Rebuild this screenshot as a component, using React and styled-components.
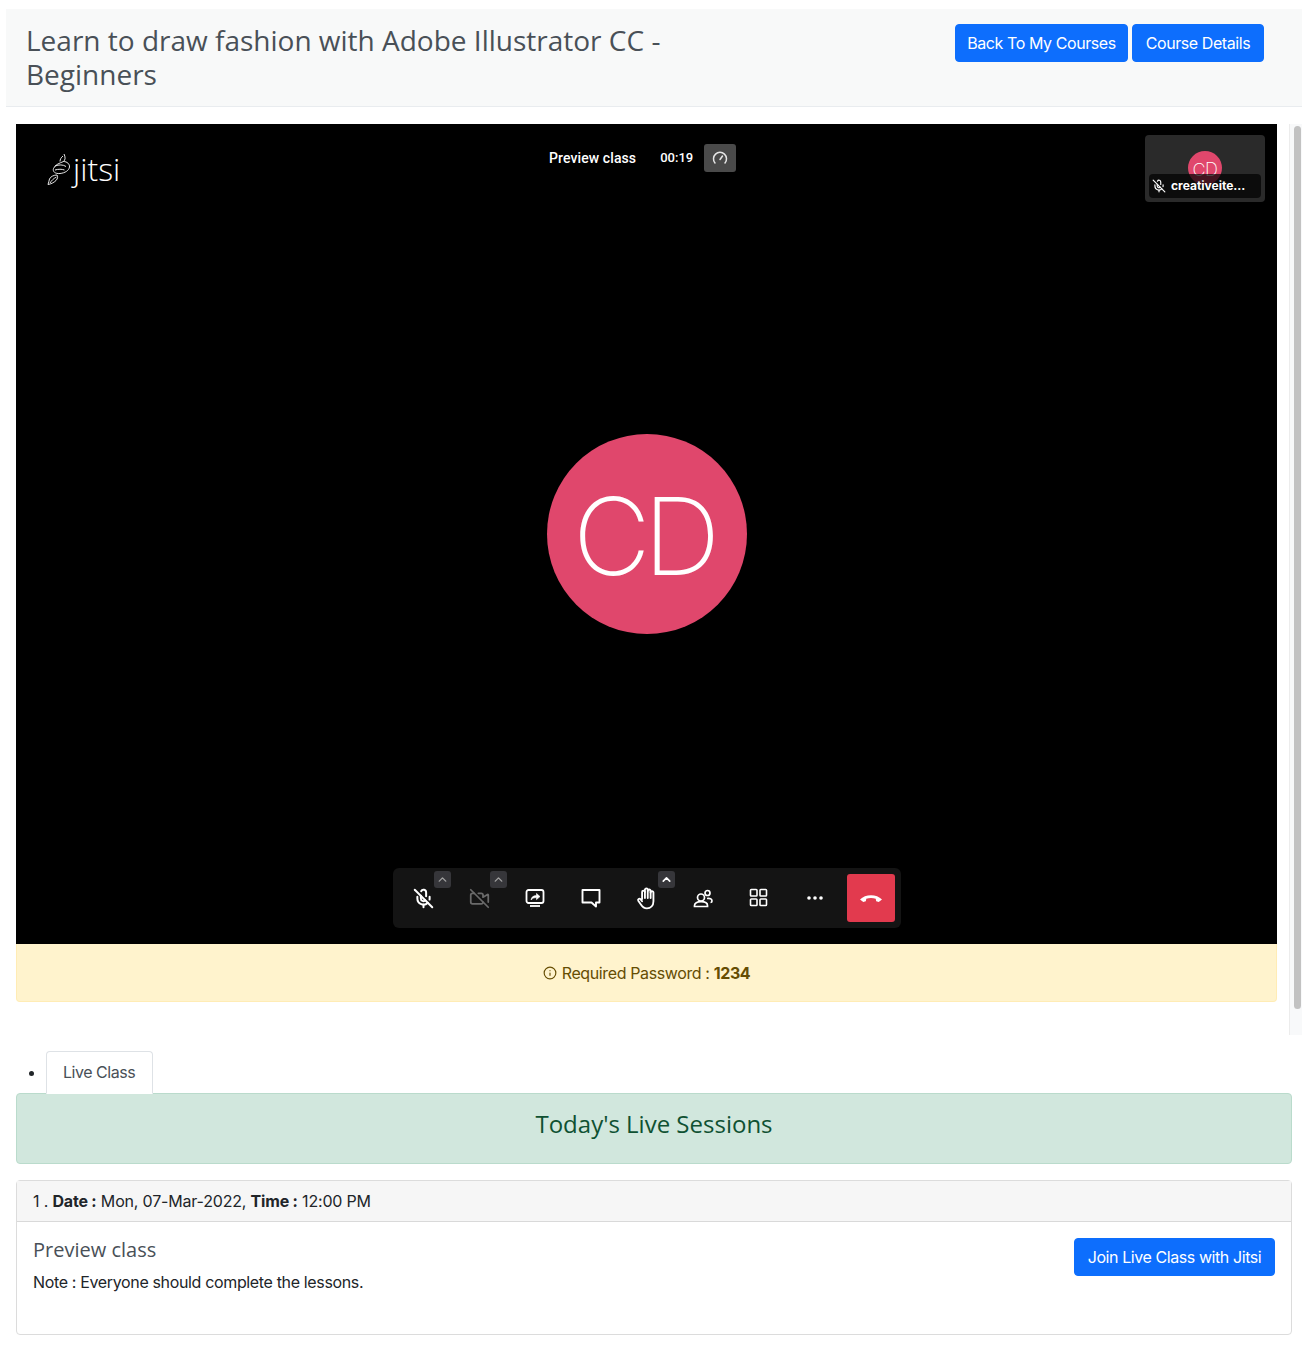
import React from 'react';
import styled, { createGlobalStyle } from 'styled-components';
import { MicOff, VideoOff, ChevronUp, Info } from 'lucide-react';

const GlobalStyle = createGlobalStyle`
  html, body { margin: 0; padding: 0; background: #fff; }
  body { font-family: Inter, "Liberation Sans", sans-serif; font-size: 16px; letter-spacing: -0.35px; color: #212529; }
  * { box-sizing: border-box; }
`;

const Page = styled.div`
  width: 1307px;
  height: 1348px;
  padding: 9px 5px 0 6px;
  overflow: hidden;
`;

const Header = styled.div`
  display: flex;
  height: 98px;
  padding: 14px 38px 0 20px;
  background: #f8f9f9;
  border-bottom: 1px solid #e9ecef;
  justify-content: space-between;
`;

const Title = styled.h1`
  width: 680px;
  margin: 0;
  font: 400 28px/34px "Open Sans", sans-serif;
  letter-spacing: 0;
  color: #495057;
`;

const ButtonGroup = styled.div`
  display: flex;
  gap: 4px;
  height: 38px;
  margin-top: 1px;
`;

const Button = styled.button`
  width: ${p => p.$width}px;
  height: 38px;
  padding: 0;
  border: 1px solid #0d6efd;
  border-radius: 4px;
  background: #0d6efd;
  color: #fff;
  font: 400 16px/24px Inter, sans-serif;
  letter-spacing: -0.42px;
  white-space: nowrap;
`;

const Content = styled.div`
  padding: 0 10px;
`;

const FrameRow = styled.div`
  display: flex;
  gap: 12px;
  margin: 17px -10px 0 0;
  height: 911px;
`;

const FrameMain = styled.div`
  flex: none;
  width: 1261px;
`;

const Scrollbar = styled.div`
  flex: none;
  width: 13px;
  padding: 2px 1px 26px 4px;
  background: #f8f9fa;
  border-left: 1px solid #ececec;
`;

const ScrollThumb = styled.div`
  height: 100%;
  border-radius: 4px;
  background: #c2c2c2;
`;

const Video = styled.div`
  position: relative;
  display: flex;
  align-items: center;
  justify-content: center;
  height: 820px;
  background: #000;
  color: #fff;
`;

const LargeAvatar = styled.div`
  display: flex;
  align-items: center;
  justify-content: center;
  width: 200px;
  height: 200px;
  padding: 4px 7px 0 0;
  border-radius: 50%;
  background: #e0476c;
  font: 150 107px/1 Inter, sans-serif;
  letter-spacing: -7px;
  color: #fff;
`;

const Logo = styled.div`
  position: absolute;
  top: 26px;
  left: 31px;
  display: flex;
  align-items: center;
  gap: 2px;
  font: 300 32px/38px "Open Sans", sans-serif;
  letter-spacing: 0;
  color: #fff;
`;

const Subject = styled.div`
  position: absolute;
  top: 20px;
  left: 533px;
  display: flex;
  align-items: center;
  height: 28px;
  font: 500 14px/20px Roboto, sans-serif;
  letter-spacing: 0.1px;
`;

const Timer = styled.span`
  margin-left: 24px;
  font-size: 13px;
  letter-spacing: 0;
`;

const Stats = styled.div`
  display: flex;
  align-items: center;
  justify-content: center;
  width: 32px;
  height: 28px;
  margin-left: 11px;
  border-radius: 3px;
  background: #4a4a4a;
`;

const Thumb = styled.div`
  position: absolute;
  top: 11px;
  right: 12px;
  display: flex;
  justify-content: center;
  width: 120px;
  height: 67px;
  padding-top: 16px;
  border-radius: 4px;
  background: #2a2a2a;
  overflow: hidden;
`;

const SmallAvatar = styled.div`
  width: 34px;
  height: 34px;
  border-radius: 50%;
  background: #e0476c;
  font: 200 18px/37px Inter, sans-serif;
  letter-spacing: -0.5px;
  text-align: center;
`;

const ThumbLabel = styled.div`
  position: absolute;
  left: 4px;
  right: 4px;
  bottom: 4px;
  display: flex;
  align-items: center;
  gap: 5px;
  height: 24px;
  padding-left: 3px;
  border-radius: 4px;
  background: rgba(0, 0, 0, 0.7);
  font: 700 12px/16px Inter, sans-serif;
  letter-spacing: 0;
`;

const Toolbar = styled.div`
  position: absolute;
  left: 377px;
  bottom: 16px;
  display: flex;
  align-items: center;
  gap: 8px;
  width: 508px;
  height: 60px;
  padding: 6px;
  border-radius: 6px;
  background: #141414;
`;

const ToolButton = styled.div`
  position: relative;
  display: flex;
  align-items: center;
  justify-content: center;
  width: 48px;
  height: 48px;
  color: ${p => (p.$dim ? '#6a6a6a' : '#fff')};
`;

const Caret = styled.div`
  position: absolute;
  top: -3px;
  right: -4px;
  display: flex;
  align-items: center;
  justify-content: center;
  width: 17px;
  height: 17px;
  border-radius: 3px;
  background: #36363a;
  color: ${p => (p.$bright ? '#fff' : '#a0a0a0')};
`;

const HangUp = styled(ToolButton)`
  border-radius: 3px;
  background: #e23a4e;
`;

const PasswordAlert = styled.div`
  display: flex;
  align-items: center;
  justify-content: center;
  gap: 5px;
  height: 58px;
  border: 1px solid #ffecb5;
  border-top: none;
  border-radius: 0 0 4px 4px;
  background: #fff3cd;
  color: #664d03;
  letter-spacing: -0.38px;
`;

const TabList = styled.ul`
  display: flex;
  height: 42px;
  margin: 16px 0 0;
  padding: 0 0 0 30px;
`;

const Tab = styled.a`
  display: block;
  height: 43px;
  padding: 8px 17px 8px 16px;
  border: 1px solid #dee2e6;
  border-bottom-color: transparent;
  border-radius: 4px 4px 0 0;
  background: #fff;
  color: #495057;
  line-height: 24px;
  letter-spacing: -0.47px;
`;

const SessionsBanner = styled.div`
  height: 71px;
  border: 1px solid #badbcc;
  border-radius: 4px;
  background: #d1e7dd;
  color: #0f5132;
  font: 400 24px/60px "Open Sans", sans-serif;
  letter-spacing: 0;
  text-align: center;
`;

const Card = styled.div`
  height: 155px;
  margin-top: 16px;
  border: 1px solid #dcdcdc;
  border-radius: 4px;
`;

const CardHeader = styled.div`
  height: 41px;
  padding: 0 16px;
  background: #f6f6f6;
  border-bottom: 1px solid #d9d9d9;
  line-height: 40px;
  letter-spacing: -0.18px;
`;

const CardBody = styled.div`
  display: flex;
  justify-content: space-between;
  padding: 16px;
`;

const CardTitle = styled.h5`
  margin: 0 0 8px;
  font: 400 20px/24px "Open Sans", sans-serif;
  letter-spacing: 0;
  color: #495057;
`;

const CardText = styled.p`
  margin: 0;
  line-height: 24px;
`;

const ShareIcon = () => (
  <svg width="20" height="20" viewBox="0 0 20 20" fill="none" stroke="currentColor" strokeWidth="1.8">
    <rect x="1.5" y="2" width="17" height="13" rx="2" />
    <path d="M5 18h10" />
    <path d="M6 12c.4-3 2.4-4.4 5.5-4.4V5.4L15 8.6l-3.5 3V9.6c-2.3 0-4 .7-5.500 2.400z" fill="currentColor" strokeWidth="0.6" />
  </svg>
);

const ChatIcon = () => (
  <svg width="20" height="20" viewBox="0 0 20 20" fill="none" stroke="currentColor" strokeWidth="1.9" strokeLinejoin="round">
    <path d="M1.5 2h17v12.5h-3.5v4l-4.5-4h-9z" />
  </svg>
);

const HandIcon = () => (
  <svg width="22" height="24" viewBox="0 0 20 22" fill="none" stroke="currentColor" strokeWidth="1.7" strokeLinecap="round" strokeLinejoin="round">
    <path d="M5.5 12V5.5a1.3 1.3 0 0 1 2.6 0V3.5a1.3 1.3 0 0 1 2.6 0v1a1.3 1.3 0 0 1 2.6 0V6a1.3 1.3 0 0 1 2.600 0V14c0 4-2.500 6.500-6 6.500-2.800 0-4.200-1.300-5.500-3.500L2 13.500c-.7-1.300 1-2.500 2-1.500l1.500 2" />
    <path d="M8.1 5.5V11M10.7 4.500V11M13.300 5V11" />
  </svg>
);

const UsersIcon = () => (
  <svg width="20" height="20" viewBox="0 0 20 20" fill="none" stroke="currentColor" strokeWidth="1.7">
    <circle cx="8" cy="9.5" r="3.5" />
    <path d="M1.5 18.500v-1c0-2.500 2.500-3.800 6.500-3.800s6.500 1.300 6.500 3.800v1z" />
    <circle cx="14.5" cy="5" r="2.5" />
    <path d="M14 10.500c3-.5 5 .3 5 2.500 0 1-.5 1.500-1.500 1.500" />
  </svg>
);

const GridIcon = () => (
  <svg width="20" height="20" viewBox="0 0 20 20" fill="none" stroke="currentColor" strokeWidth="1.6">
    <rect x="1.5" y="1.5" width="6.5" height="6.5" rx="0.8" />
    <rect x="11" y="1.5" width="6.5" height="6.5" rx="0.8" />
    <rect x="1.5" y="11" width="6.5" height="6.5" rx="0.8" />
    <rect x="11" y="11" width="6.5" height="6.5" rx="0.8" />
  </svg>
);

const MoreIcon = () => (
  <svg width="20" height="20" viewBox="0 0 20 20" fill="currentColor">
    <circle cx="4" cy="10" r="1.8" />
    <circle cx="10" cy="10" r="1.8" />
    <circle cx="16" cy="10" r="1.8" />
  </svg>
);

const HangUpIcon = () => (
  <svg width="24" height="24" viewBox="0 0 24 24" fill="currentColor">
    <path d="M1 13.500c2.800-2.900 6.700-4.300 11-4.300s8.200 1.400 11 4.300l-3.300 2.500-2.500-.7-.5-2.500c-1.400-.6-3-.8-4.700-.8s-3.300.2-4.700.8l-.5 2.500-2.500.7z" />
  </svg>
);

const GaugeIcon = () => (
  <svg width="16" height="16" viewBox="0 0 16 16" fill="none" stroke="#e6e6e6" strokeWidth="1.5" strokeLinecap="round">
    <path d="M3 13a6.5 6.5 0 1 1 10 0" />
    <path d="M8 9.5l2.5-3.5" />
  </svg>
);

const JitsiMark = () => (
  <svg width="24" height="34" viewBox="0 0 24 34" fill="none" stroke="#fff" strokeWidth="0.9">
    <path d="M17 2c1.500 3 1.500 6-.5 7.500C13 11 8 12.500 6.500 16.500c-1 3 1.500 5.500 6.500 5 5-.5 9-3 9.500-6.500.3-3-2.500-5.500-6-5.500" />
    <path d="M16 4c-2 1.500-3 3.500-3 5.500" />
    <path d="M8 14c4-1.500 8-1.500 11 .5M8 18c3-1 7-1 9.500 0" />
    <path d="M10 23c-3 0-6.500 1.500-7.500 4-.6 2-.8 3.500-1.500 5.500 3-.5 6-2 8-4 1.800-2 2-3.800 1-5.500z" />
    <path d="M3 31c1.500-2.500 3.500-4.500 6.500-6" />
  </svg>
);

const App = () => (
  <Page>
    <GlobalStyle />
    <Header>
      <Title>Learn to draw fashion with Adobe Illustrator CC - Beginners</Title>
      <ButtonGroup>
        <Button $width={173}>Back To My Courses</Button>
        <Button $width={132}>Course Details</Button>
      </ButtonGroup>
    </Header>
    <Content>
      <FrameRow>
        <FrameMain>
          <Video>
            <Logo><JitsiMark />jitsi</Logo>
            <Subject>
              Preview class
              <Timer>00:19</Timer>
              <Stats><GaugeIcon /></Stats>
            </Subject>
            <Thumb>
              <SmallAvatar>CD</SmallAvatar>
              <ThumbLabel><MicOff size={14} />creativeite...</ThumbLabel>
            </Thumb>
            <LargeAvatar>CD</LargeAvatar>
            <Toolbar>
              <ToolButton>
                <MicOff size={21} strokeWidth={2.3} />
                <Caret><ChevronUp size={13} strokeWidth={2.6} /></Caret>
              </ToolButton>
              <ToolButton $dim>
                <VideoOff size={21} />
                <Caret><ChevronUp size={13} strokeWidth={2.6} /></Caret>
              </ToolButton>
              <ToolButton><ShareIcon /></ToolButton>
              <ToolButton><ChatIcon /></ToolButton>
              <ToolButton>
                <HandIcon />
                <Caret $bright><ChevronUp size={13} strokeWidth={3} /></Caret>
              </ToolButton>
              <ToolButton><UsersIcon /></ToolButton>
              <ToolButton><GridIcon /></ToolButton>
              <ToolButton><MoreIcon /></ToolButton>
              <HangUp><HangUpIcon /></HangUp>
            </Toolbar>
          </Video>
          <PasswordAlert>
            <Info size={14} />
            <span>Required Password : <b>1234</b></span>
          </PasswordAlert>
        </FrameMain>
        <Scrollbar><ScrollThumb /></Scrollbar>
      </FrameRow>
      <TabList>
        <li><Tab>Live Class</Tab></li>
      </TabList>
      <SessionsBanner>Today's Live Sessions</SessionsBanner>
      <Card>
        <CardHeader>1 . <b>Date :</b> Mon, 07-Mar-2022, <b>Time :</b> 12:00 PM</CardHeader>
        <CardBody>
          <div>
            <CardTitle>Preview class</CardTitle>
            <CardText>Note : Everyone should complete the lessons.</CardText>
          </div>
          <Button $width={201}>Join Live Class with Jitsi</Button>
        </CardBody>
      </Card>
    </Content>
  </Page>
);

export default App;
